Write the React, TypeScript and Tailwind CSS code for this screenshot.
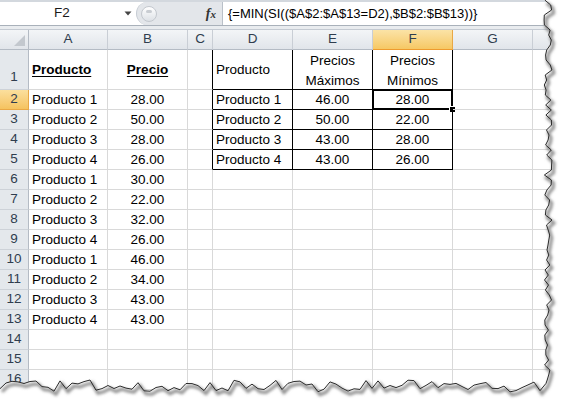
import React from "react";

const colA = ["Producto 1", "Producto 2", "Producto 3", "Producto 4", "Producto 1", "Producto 2", "Producto 3", "Producto 4", "Producto 1", "Producto 2", "Producto 3", "Producto 4"];
const colB = ["28.00", "50.00", "28.00", "26.00", "30.00", "22.00", "32.00", "26.00", "46.00", "34.00", "43.00", "43.00"];
const colD = ["Producto 1", "Producto 2", "Producto 3", "Producto 4"];
const colE = ["46.00", "50.00", "43.00", "43.00"];
const colF = ["28.00", "22.00", "28.00", "26.00"];

const cols = [
  { key: "A", w: "w-[79px]" },
  { key: "B", w: "w-[80px]" },
  { key: "C", w: "w-[25px]" },
  { key: "D", w: "w-[80px]" },
  { key: "E", w: "w-[80px]" },
  { key: "F", w: "w-[80px]" },
  { key: "G", w: "w-[80px]" },
  { key: "H", w: "w-[40px]" },
];

const formula = "{=MIN(SI(($A$2:$A$13=D2),$B$2:$B$13))}";

// little pseudo random for the torn paper edge
function rng(seed: number) {
  let s = seed;
  return () => {
    s = (s * 16807) % 2147483647;
    return s / 2147483647;
  };
}

function tornPoints() {
  const r = rng(12345);
  const right: [number, number][] = [];
  for (let y = 0; y <= 384; y += 5) {
    right.push([548 + (r() - 0.5) * 8, y]);
  }
  const bottom: [number, number][] = [];
  for (let x = 546; x >= 0; x -= 6) {
    bottom.push([x, 386 + (r() - 0.5) * 12]);
  }
  return [...right, ...bottom];
}

const TornEdge = () => {
  const pts = tornPoints();
  const line = pts.map((p) => p[0].toFixed(1) + "," + p[1].toFixed(1)).join(" ");
  const shadow = pts.map((p) => (p[0] + 2).toFixed(1) + "," + (p[1] + 3).toFixed(1)).join(" ");
  const fill = "566,0 " + line + " 0,403 566,403";
  return (
    <svg className="absolute inset-0 pointer-events-none" width="566" height="403" viewBox="0 0 566 403">
      <defs>
        <filter id="blur" x="-5%" y="-5%" width="110%" height="110%">
          <feGaussianBlur stdDeviation="1.4" />
        </filter>
      </defs>
      <polygon points={fill} fill="#ffffff" />
      <polyline points={shadow} fill="none" stroke="#8a8a8a" strokeWidth="3" filter="url(#blur)" />
      <polyline points={line} fill="none" stroke="#2b2b2b" strokeWidth="1" />
    </svg>
  );
};

function cellContent(row: number, col: string): React.ReactNode {
  if (row === 1) {
    if (col === "A") return <span className="pl-[3px] font-bold underline underline-offset-2">Producto</span>;
    if (col === "B") return <span className="w-full text-center font-bold underline underline-offset-2">Precio</span>;
    if (col === "D") return <span className="pl-[3px]">Producto</span>;
    if (col === "E")
      return (
        <span className="w-full text-center leading-[20px]">
          Precios
          <br />
          Máximos
        </span>
      );
    if (col === "F")
      return (
        <span className="w-full text-center leading-[20px]">
          Precios
          <br />
          Mínimos
        </span>
      );
    return null;
  }
  const i = row - 2;
  if (col === "A" && colA[i]) return <span className="pl-[3px]">{colA[i]}</span>;
  if (col === "B" && colB[i]) return <span className="w-full text-center">{colB[i]}</span>;
  if (i < 4) {
    if (col === "D") return <span className="pl-[3px]">{colD[i]}</span>;
    if (col === "E") return <span className="w-full text-center">{colE[i]}</span>;
    if (col === "F") return <span className="w-full text-center">{colF[i]}</span>;
  }
  return null;
}

const FormulaBar = () => (
  <div className="flex flex-col h-[30px]">
    <div className="h-[2px] bg-[#d3d8de]" />
    <div className="flex h-[23px] bg-white">
      <div className="w-[136px] flex items-center">
        <span className="w-[124px] text-center text-[#1a1a1a]">F2</span>
        <svg width="8" height="5" viewBox="0 0 8 5">
          <path d="M0.5 0.5 L7.5 0.5 L4 4.5 Z" fill="#444" />
        </svg>
      </div>
      <div className="w-[86px] flex items-center bg-[#e3e6ea] rounded-l-[12px] border-l border-[#c6ccd3]">
        <div className="ml-[4px] w-[16px] h-[16px] rounded-full border border-[#c3c8ce] bg-gradient-to-b from-white to-[#dde1e6] flex items-center justify-center">
          <div className="w-[6px] h-[3px] rounded-full bg-[#c9cdd2] -mt-[5px]" />
        </div>
        <span className="ml-auto mr-[6px] font-['Liberation_Serif',serif] italic font-bold text-[14px] text-[#333]">
          f<span className="text-[11px]">x</span>
        </span>
      </div>
      <div className="flex-1 flex items-center border-l border-[#b9c0c8] pl-[5px] text-[13px] text-black whitespace-nowrap">
        {formula}
      </div>
    </div>
    <div className="h-[5px] border-t border-t-[#a9b1ba] bg-[#e9ecef] border-b border-b-[#c4cad2]" />
  </div>
);

const HeaderRow = () => (
  <div className="flex h-[20px]">
    <div className="w-[29px] h-[20px] border-r border-b border-r-[#b4bbc4] border-b-[#b4bbc4] bg-gradient-to-b from-[#f3f5f7] to-[#e1e5ea] relative shrink-0">
      <svg className="absolute right-[3px] bottom-[3px]" width="11" height="11" viewBox="0 0 11 11">
        <polygon points="11,0 11,11 0,11" fill="#c3c8ce" />
      </svg>
    </div>
    {cols.map((c) =>
      c.key === "F" ? (
        <div
          key={c.key}
          className={`${c.w} shrink-0 h-[20px] flex items-center justify-center border-r border-b border-r-[#e9a845] border-b-[#ee9b2e] bg-gradient-to-b from-[#fbe3a6] to-[#f6c863] text-[#2f3d4e]`}
        >
          {c.key}
        </div>
      ) : (
        <div
          key={c.key}
          className={`${c.w} shrink-0 h-[20px] flex items-center justify-center border-r border-b border-r-[#c9ced5] border-b-[#b4bbc4] bg-gradient-to-b from-[#f3f5f7] to-[#e1e5ea] text-[#2f3d4e]`}
        >
          {c.key === "H" ? "" : c.key}
        </div>
      )
    )}
  </div>
);

const GridRow = ({ row }: { row: number }) => {
  const inTable = row >= 1 && row <= 5;
  const h = row === 1 ? "h-[40px]" : "h-[20px]";
  return (
    <div className="flex">
      {row === 2 ? (
        <div className={`${h} w-[29px] shrink-0 flex items-center justify-center border-r border-b border-r-[#e9a845] border-b-[#e9a845] bg-gradient-to-b from-[#fbdf9d] to-[#f5c35e] text-[#2f3d4e]`}>
          {row}
        </div>
      ) : (
        <div
          className={`${h} w-[29px] shrink-0 flex justify-center border-r border-b border-r-[#b4bbc4] border-b-[#cdd2d8] bg-[#e4e8ec] text-[#2f3d4e] ${row === 1 ? "items-end pb-[2px]" : "items-center"}`}
        >
          {row}
        </div>
      )}
      {cols.map((c) => {
        const blackR = inTable && (c.key === "C" || c.key === "D" || c.key === "E" || c.key === "F");
        const blackB = inTable && (c.key === "D" || c.key === "E" || c.key === "F");
        const selected = row === 2 && c.key === "F";
        return (
          <div
            key={c.key}
            className={`${c.w} ${h} shrink-0 relative flex items-center pt-[2px] border-r border-b whitespace-nowrap ${blackR ? "border-r-black" : "border-r-[#d9d9d9]"} ${blackB ? "border-b-black" : "border-b-[#d9d9d9]"}`}
          >
            {cellContent(row, c.key)}
            {selected && (
              <>
                <div className="absolute -left-[1px] -top-[1px] -right-[1px] -bottom-[1px] border-2 border-black shadow-[inset_0_0_0_1px_#ffffff]" />
                <div className="absolute -right-[4px] -bottom-[4px] w-[7px] h-[7px] bg-black border border-white" />
              </>
            )}
          </div>
        );
      })}
    </div>
  );
};

export default function App() {
  const rows = Array.from({ length: 16 }, (_, i) => i + 1);
  return (
    <div className="relative w-[566px] h-[403px] overflow-hidden bg-white font-['Liberation_Sans',Arial,sans-serif] text-[13.5px] text-black">
      <FormulaBar />
      <HeaderRow />
      {rows.map((r) => (
        <GridRow key={r} row={r} />
      ))}
      <TornEdge />
    </div>
  );
}
